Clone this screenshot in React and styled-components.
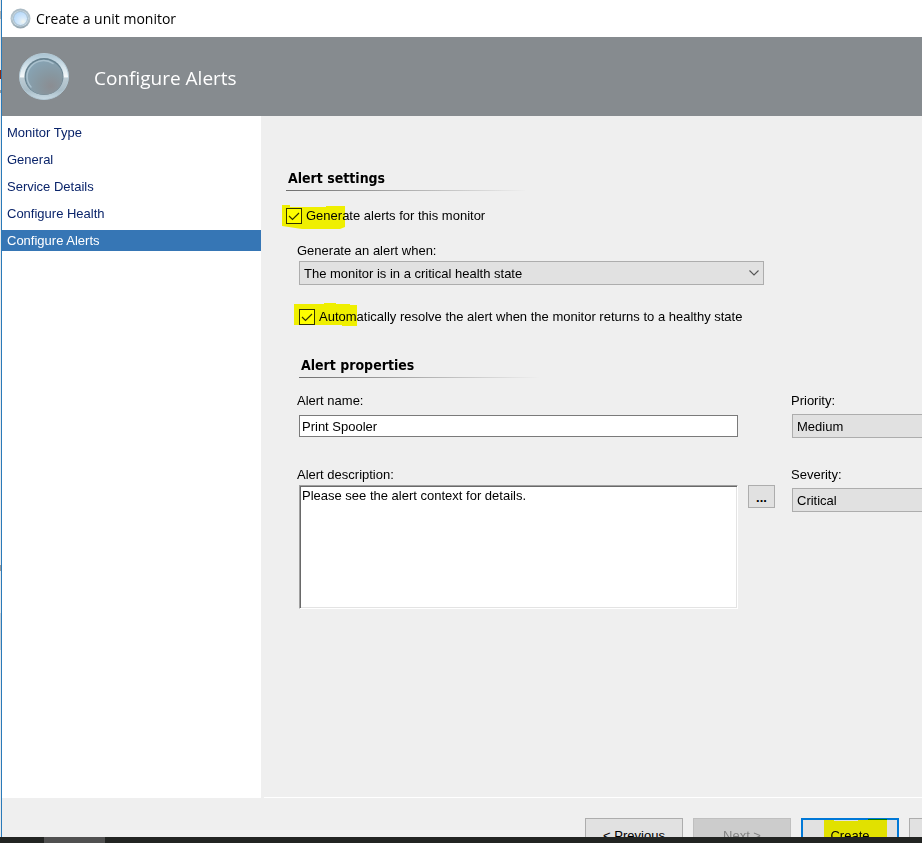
import React, { useState } from "react";
import styled, { createGlobalStyle } from "styled-components";

const GlobalStyle = createGlobalStyle`
  * {
    box-sizing: border-box;
  }

  body {
    margin: 0;
    overflow: hidden;
    font-family: "Liberation Sans", Arial, sans-serif;
    font-size: 13px;
    line-height: 16px;
    color: #000;
  }
`;

const Desktop = styled.div`
  height: 100vh;
  display: flex;
  flex-direction: column;
`;

const Screen = styled.div`
  flex: 1;
  min-height: 0;
  display: flex;
`;

const Backdrop = styled.div`
  width: 1px;
  background: linear-gradient(
    #e6e6e6 0 11px,
    #b0b0b0 11px 19px,
    #e6e6e6 19px 70px,
    #8a2a12 70px 79px,
    #e6e6e6 79px 90px,
    #9a9a9a 90px 93px,
    #e9eaec 93px 565px,
    #9a9a9a 565px 571px,
    #e9eaec 571px 613px,
    #c8d0d8 613px 650px,
    #e9eaec 650px
  );
`;

const Window = styled.div`
  flex: 1;
  min-width: 0;
  display: flex;
  flex-direction: column;
  border-left: 1px solid #2a7ab9;
  background: #efefef;
  overflow: hidden;
`;

const TitleBar = styled.div`
  flex: none;
  height: 37px;
  padding: 0 8px;
  display: flex;
  align-items: center;
  gap: 5px;
  background: #fff;
  font-family: "Open Sans", "Noto Sans", sans-serif;
  font-size: 14px;
`;

const Banner = styled.header`
  flex: none;
  height: 79px;
  padding: 0 16px;
  display: flex;
  align-items: center;
  gap: 24px;
  background: #868b8f;
  color: #fff;
`;

const Title = styled.h1`
  margin: 0;
  padding-top: 2px;
  font-family: "Open Sans", "Noto Sans", sans-serif;
  font-size: 19px;
  line-height: 28px;
  font-weight: 400;
`;

const Body = styled.div`
  flex: 1;
  min-height: 0;
  display: flex;
`;

const Nav = styled.nav`
  flex: none;
  width: 259px;
  padding-top: 6px;
  display: flex;
  flex-direction: column;
  gap: 6px;
  background: #fff;
`;

const NavLink = styled.a`
  padding: 0 5px;
  line-height: 21px;
  text-decoration: none;
  color: ${(p) => (p.$active ? "#fff" : "#0a246a")};
  background: ${(p) => (p.$active ? "#3676b5" : "transparent")};
`;

const Main = styled.main`
  flex: 1;
  min-width: 0;
  margin-left: 3px;
  padding: 52px 0 0 22px;
  border-bottom: 1px solid #fff;
`;

const Heading = styled.h2`
  margin: 0;
  padding: 0 2px 2px;
  width: 240px;
  font-family: "DejaVu Sans Condensed", "DejaVu Sans", sans-serif;
  font-size: 14px;
  line-height: 20px;
  font-weight: 700;
  border-bottom: 1px solid;
  border-image: linear-gradient(to right, #6e6e6e, #efefef) 1;
`;

const Indent = styled.div`
  padding-left: 13px;
`;

const CheckRow = styled.div`
  position: relative;
  display: flex;
  align-items: center;
  gap: 4px;
  margin-top: ${(p) => p.$top}px;
`;

const CheckBox = styled.input`
  appearance: none;
  width: 16px;
  height: 16px;
  margin: 0;
  border: 1px solid #333;
  background: #fff;
`;

const Tick = styled.svg`
  position: absolute;
  left: 0;
  top: 0;
  pointer-events: none;
`;

const Marker = styled.svg`
  position: absolute;
  left: ${(p) => p.$left}px;
  top: ${(p) => p.$top}px;
  mix-blend-mode: multiply;
  pointer-events: none;
`;

const Row = styled.div`
  display: flex;
  align-items: flex-start;
  margin-top: ${(p) => p.$top}px;
`;

const Field = styled.div`
  flex: 1;
  min-width: 0;
  display: flex;
  flex-direction: column;
  gap: ${(p) => p.$gap}px;
`;

const Label = styled.label`
  margin-left: ${(p) => (p.$side ? -1 : -2)}px;
`;

/* The right-hand fields run on past the edge of the window. */
const SideField = styled(Field)`
  flex: none;
  width: 180px;
  margin: 0 -50px 0 17px;
`;

/* Keeps the wide drop-down clear of the right-hand column. */
const Spacer = styled.div`
  flex: none;
  width: 158px;
`;

const SelectContainer = styled.div`
  display: grid;
  grid-template-areas: "select";
  align-items: center;
`;

const SelectBox = styled.select`
  grid-area: select;
  appearance: none;
  width: 100%;
  height: 24px;
  margin: 0;
  padding: 2px 24px 0 4px;
  border: 1px solid #adadad;
  border-radius: 0;
  background: #e1e1e1;
  color: #000;
  font: inherit;
`;

const Arrow = styled.svg`
  grid-area: select;
  justify-self: end;
  margin-right: 5px;
  pointer-events: none;
`;

const Input = styled.input`
  width: 100%;
  height: 22px;
  padding: 0 2px;
  border: 1px solid #7a7a7a;
  background: #fff;
  font: inherit;
`;

const TextArea = styled.textarea`
  width: 100%;
  height: 124px;
  padding: 2px;
  resize: none;
  border: 1px solid;
  border-color: #a0a0a0 #fff #fff #a0a0a0;
  box-shadow: inset 1px 1px #696969, inset -1px -1px #e3e3e3;
  outline: none;
  background: #fff;
  font: inherit;
`;

const Side = styled.div`
  flex: none;
  width: 37px;
  padding: 18px 0 0 10px;
`;

const Button = styled.button`
  position: relative;
  flex: none;
  width: 98px;
  height: 34px;
  padding: 2px 0 0;
  border: ${(p) => (p.$primary ? "2px solid #0078d7" : "1px solid #adadad")};
  background: #e1e1e1;
  color: #000;
  font: inherit;

  &:disabled {
    border-color: #bfbfbf;
    background: #cccccc;
    color: #838383;
  }
`;

const BrowseButton = styled(Button)`
  width: 27px;
  height: 23px;
  font-weight: 700;
`;

const Footer = styled.footer`
  flex: none;
  height: 39px;
  padding-top: 20px;
  margin-right: -85px;
  display: flex;
  justify-content: flex-end;
  gap: 10px;
  overflow: hidden;
`;

const Taskbar = styled.div`
  flex: none;
  height: 6px;
  padding-left: 44px;
  background: #222422;
`;

const TaskbarItem = styled.div`
  width: 61px;
  height: 100%;
  background: #505050;
`;

const SmallOrb = () => (
  <svg width="21" height="21" viewBox="0 0 21 21">
    <defs>
      <linearGradient id="smallRing" x1="0" y1="0" x2="0" y2="1">
        <stop offset="0" stopColor="#a9b9c3" />
        <stop offset="0.5" stopColor="#b9c8d0" />
        <stop offset="1" stopColor="#93a5b0" />
      </linearGradient>
      <radialGradient id="smallGlass" cx="0.68" cy="0.72" r="0.7">
        <stop offset="0" stopColor="#f3f6ef" />
        <stop offset="0.4" stopColor="#d5e9fb" />
        <stop offset="1" stopColor="#b9dafa" />
      </radialGradient>
    </defs>
    <circle cx="10.5" cy="10.5" r="10" fill="url(#smallRing)" />
    <circle cx="10.5" cy="10.5" r="8" fill="#cfdde6" />
    <circle cx="10.5" cy="10.5" r="7" fill="url(#smallGlass)" stroke="#a4bccd" />
  </svg>
);

const LargeOrb = () => (
  <svg width="52" height="50" viewBox="0 0 52 50">
    <defs>
      <linearGradient id="ring" x1="0" y1="0" x2="0" y2="1">
        <stop offset="0" stopColor="#a9c3d2" />
        <stop offset="0.3" stopColor="#d5e4ec" />
        <stop offset="0.5" stopColor="#f4f8fa" />
        <stop offset="0.54" stopColor="#bccbd3" />
        <stop offset="0.8" stopColor="#a9bdc8" />
        <stop offset="1" stopColor="#c9dce6" />
      </linearGradient>
      <radialGradient id="glass" cx="0.68" cy="0.75" r="0.75">
        <stop offset="0" stopColor="#8b8d92" />
        <stop offset="0.45" stopColor="#8797a0" />
        <stop offset="1" stopColor="#87a3b3" />
      </radialGradient>
    </defs>
    <ellipse cx="26" cy="24.5" rx="24.5" ry="23" fill="url(#ring)" stroke="#b5cbd7" />
    <ellipse cx="26" cy="24.5" rx="19.5" ry="18.5" fill="#66818f" />
    <ellipse cx="26.3" cy="25.3" rx="18.5" ry="17.5" fill="url(#glass)" />
    <path
      d="M13 35 A16.5 16 0 0 1 35 11.5"
      fill="none"
      stroke="#a9c0cd"
      strokeWidth="1.5"
      strokeLinecap="round"
    />
  </svg>
);

const Check = ({ id, label, top, children }) => {
  const [checked, setChecked] = useState(true);

  return (
    <CheckRow $top={top}>
      <CheckBox
        type="checkbox"
        id={id}
        checked={checked}
        onChange={(e) => setChecked(e.target.checked)}
      />
      {checked ? (
        <Tick width="16" height="16" viewBox="0 0 16 16">
          <path d="M3 8 L6.5 11.5 L13 5" fill="none" stroke="#333" strokeWidth="1.2" />
        </Tick>
      ) : null}
      <label htmlFor={id}>{label}</label>
      {children}
    </CheckRow>
  );
};

const Select = ({ id, data }) => (
  <SelectContainer>
    <SelectBox id={id} name={id}>
      {data.map((item) => (
        <option key={item}>{item}</option>
      ))}
    </SelectBox>
    <Arrow width="10" height="6" viewBox="0 0 10 6">
      <path d="M0.5 0.5 L5 5 L9.5 0.5" fill="none" stroke="#555" strokeWidth="1.1" />
    </Arrow>
  </SelectContainer>
);

const steps = [
  "Monitor Type",
  "General",
  "Service Details",
  "Configure Health",
  "Configure Alerts",
];

const App = () => {
  const [active, setActive] = useState("Configure Alerts");

  return (
    <Desktop>
      <GlobalStyle />
      <Screen>
        <Backdrop />
        <Window>
          <TitleBar>
            <SmallOrb />
            <span>Create a unit monitor</span>
          </TitleBar>
          <Banner>
            <LargeOrb />
            <Title>Configure Alerts</Title>
          </Banner>
          <Body>
            <Nav>
              {steps.map((step) => (
                <NavLink
                  href="#"
                  key={step}
                  $active={step === active}
                  onClick={() => setActive(step)}
                >
                  {step}
                </NavLink>
              ))}
            </Nav>
            <Main>
              <Heading>Alert settings</Heading>
              <Check id="generate" label="Generate alerts for this monitor" top={17}>
                <Marker $left={-4} $top={-3} width="63" height="25">
                  <path
                    d="M0 0 H8 V2 H44 V1 H63 V22 L58 24 H20 L0 21 Z"
                    fill="#ffff00"
                  />
                </Marker>
              </Check>
              <Indent>
                <Row $top={19}>
                  <Field $gap={2}>
                    <Label htmlFor="when">Generate an alert when:</Label>
                    <Select
                      id="when"
                      data={[
                        "The monitor is in a critical health state",
                        "The monitor is in a critical or warning health state",
                      ]}
                    />
                  </Field>
                  <Spacer />
                </Row>
                <Check
                  id="resolve"
                  label="Automatically resolve the alert when the monitor returns to a healthy state"
                  top={24}
                >
                  <Marker $left={-5} $top={-6} width="63" height="23">
                    <path
                      d="M0 1 H30 V0 H42 V1 H56 V2 H63 V23 H48 V22 H0 Z"
                      fill="#ffff00"
                    />
                  </Marker>
                </Check>
                <Row $top={30}>
                  <Heading>Alert properties</Heading>
                </Row>
                <Row $top={15}>
                  <Field $gap={6}>
                    <Label htmlFor="name">Alert name:</Label>
                    <Input id="name" defaultValue="Print Spooler" />
                  </Field>
                  <Side />
                  <SideField $gap={5}>
                    <Label $side htmlFor="priority">
                      Priority:
                    </Label>
                    <Select id="priority" data={["Medium", "Low", "High"]} />
                  </SideField>
                </Row>
                <Row $top={29}>
                  <Field $gap={2}>
                    <Label htmlFor="description">Alert description:</Label>
                    <TextArea
                      id="description"
                      defaultValue="Please see the alert context for details."
                    />
                  </Field>
                  <Side>
                    <BrowseButton type="button">...</BrowseButton>
                  </Side>
                  <SideField $gap={5}>
                    <Label $side htmlFor="severity">
                      Severity:
                    </Label>
                    <Select id="severity" data={["Critical", "Warning", "Information"]} />
                  </SideField>
                </Row>
              </Indent>
            </Main>
          </Body>
          <Footer>
            <Button type="button">&lt; Previous</Button>
            <Button type="button" disabled>
              Next &gt;
            </Button>
            <Button type="button" $primary>
              Create
              <Marker $left={21} $top={-1} width="63" height="23">
                <path d="M0 1 H10 V2 H34 V1 H44 V0 H63 V23 H0 Z" fill="#ffff00" />
              </Marker>
            </Button>
            <Button type="button">Cancel</Button>
          </Footer>
        </Window>
      </Screen>
      <Taskbar>
        <TaskbarItem />
      </Taskbar>
    </Desktop>
  );
};

export default App;
